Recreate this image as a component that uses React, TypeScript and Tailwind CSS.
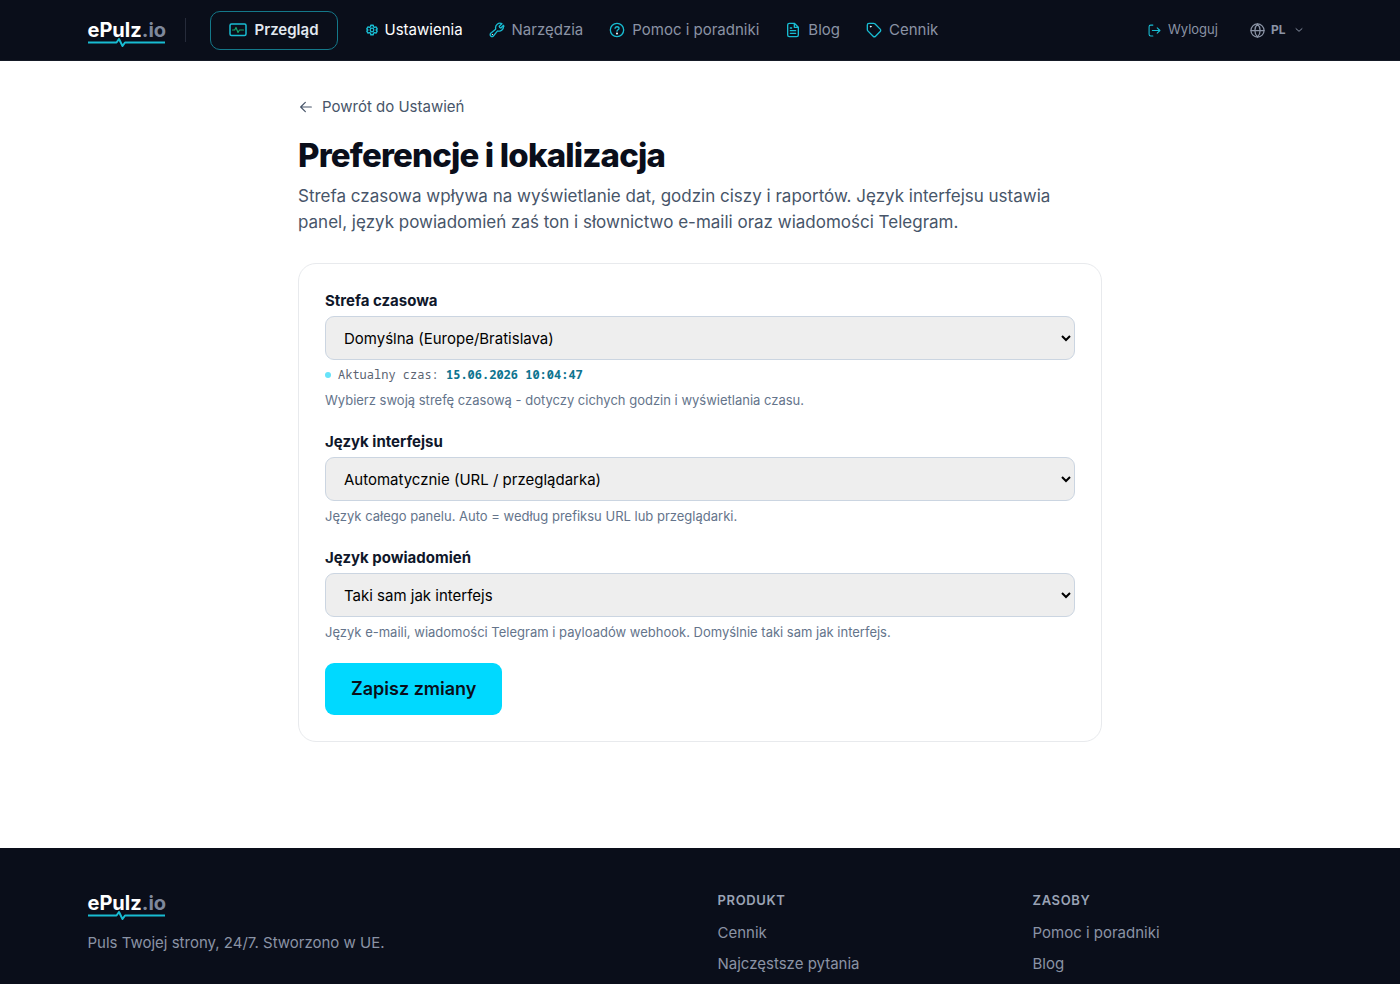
import React, { useState } from 'react'

type IconProps = {
  className?: string;
  children: React.ReactNode;
}

const Icon = ({ className = "", children }: IconProps) => (
  <svg viewBox="0 0 24 24" fill="none" stroke="currentColor" strokeWidth="2" strokeLinecap="round"
    strokeLinejoin="round" aria-hidden="true" className={`shrink-0 ${className}`}>
    {children}
  </svg>
)

const NavLinks = [
  {
    label: "Ustawienia",
    active: true,
    icon: (
      <Icon className="w-3 h-3">
        <path strokeWidth="2.8" d="M9.6 2.5h4.8l.7 3.1 1.9 1.1 3-1 2.4 4.1-2.3 2.2 2.3 2.2-2.4 4.1-3-1-1.9 1.1-.7 3.1H9.6l-.7-3.1L7 17.3l-3 1-2.4-4.1L3.9 12 1.6 9.8 4 5.7l3 1 1.9-1.1z" />
        <circle cx="12" cy="12" r="3.6" strokeWidth="2.6" />
      </Icon>
    ),
  },
  {
    label: "Narzędzia",
    icon: (
      <Icon className="w-4 h-4">
        <path d="M21.7 6.7a6.6 6.6 0 0 1-7.9 6.9c-.6-.1-1.2 0-1.6.5L6.6 21a2.8 2.8 0 0 1-4-4l6.9-5.6c.5-.4.6-1 .5-1.6a6.6 6.6 0 0 1 9.3-7.3l-4 4a3.4 3.4 0 0 0 2.5 2.5l4-4c.3.5.4 1.1.4 1.7z" />
        <circle cx="4.9" cy="18.9" r=".4" fill="white" stroke="white" strokeWidth="1" />
      </Icon>
    ),
  },
  {
    label: "Pomoc i poradniki",
    icon: (
      <Icon className="w-4 h-4">
        <circle cx="12" cy="12" r="10" />
        <path d="M9 9.3c.5-1.5 1.6-2.2 3-2.2 1.7 0 3 1 3 2.5 0 2-3 2.2-3 4.2" />
        <circle cx="12" cy="17.2" r=".6" fill="white" stroke="white" />
      </Icon>
    ),
  },
  {
    label: "Blog",
    icon: (
      <Icon className="w-4 h-4">
        <path d="M14 2H6.5A2.5 2.5 0 0 0 4 4.5v15A2.5 2.5 0 0 0 6.5 22h11a2.5 2.5 0 0 0 2.5-2.5V8zM14 2v6h6M8 13h8M8 17h8M8 9h2" />
      </Icon>
    ),
  },
  {
    label: "Cennik",
    icon: (
      <Icon className="w-4 h-4">
        <path d="M2 4.5A2.5 2.5 0 0 1 4.5 2h7c.7 0 1.3.3 1.8.7l8 8c1 1 1 2.6 0 3.6l-7 7c-1 1-2.6 1-3.6 0l-8-8A2.500 2.500 0 0 1 2 11.500z" />
        <circle cx="7" cy="7" r=".6" fill="white" stroke="white" strokeWidth="1.5" />
      </Icon>
    ),
  },
]

const FooterLinks = [
  { title: "Produkt", links: ["Cennik", "Najczęstsze pytania"] },
  { title: "Zasoby", links: ["Pomoc i poradniki", "Blog"] },
]

const Logo = () => (
  <a href="#" className="block w-[77px] shrink-0">
    <span className="block text-[20px] leading-6 font-bold text-white">
      ePulz<span className="text-[#7f889b]">.io</span>
    </span>
    <svg viewBox="0 0 77 9" fill="none" stroke="#18bcd2" strokeWidth="2" strokeLinejoin="round"
      aria-hidden="true" className="block w-full h-[9px] -mt-1">
      <path d="M0 4.500h28.500l2.500-3.500 3.500 7 2.500-3.500h40" />
    </svg>
  </a>
)

const Nav = () => {
  return (
    <header className="bg-[#0a0e1a] h-[61px] border-b border-[#151a26]">
      <div className="flex items-center h-full w-[87.5%] mx-auto">
        <div className="mt-1">
          <Logo />
        </div>
        <span className="w-px h-6 ml-5 bg-[#262b3a]" />

        <nav className="flex items-center ml-6">
          <a href="#" className="flex items-center gap-2 h-[39px] px-[18px] mr-7 rounded-[10px] border border-[#14788a] text-[15px] leading-[22px] font-semibold text-[#e2e8f0]">
            <svg viewBox="0 0 18 14" fill="none" strokeWidth="1.5" strokeLinecap="round" strokeLinejoin="round"
              aria-hidden="true" className="w-[18px] h-[14px] shrink-0">
              <rect x="1" y="1" width="16" height="11.5" rx="1.5" stroke="#18bcd2" />
              <path d="M3.500 7h2.200l1.300-2.500 2 5 1.500-2.500h4" stroke="#16a36a" strokeWidth="1.2" />
            </svg>
            Przegląd
          </a>
          <div className="flex items-center gap-[26px]">
            {NavLinks.map((link) => (
              <a
                key={link.label}
                href="#"
                className={`flex items-center gap-[7px] text-[15px] leading-6 ${link.active ? "text-white" : "text-[#8a93a5]"}`}
              >
                <span className="text-[#18bcd2]">{link.icon}</span>
                {link.label}
              </a>
            ))}
          </div>
        </nav>

        <div className="flex items-center ml-auto pr-[10px]">
          <a href="#" className="flex items-center gap-[7px] text-[13px] text-[#8a93a5]">
            <Icon className="w-[13px] h-[13px] text-[#18bcd2]">
              <path d="M9 2H5a3 3 0 0 0-3 3v14a3 3 0 0 0 3 3h4M8 12h14M17 7l5 5-5 5" />
            </Icon>
            Wyloguj
          </a>
          <button className="flex items-center ml-8 text-[12px] font-bold text-[#8a93a5]">
            <Icon className="w-[15px] h-[15px]">
              <circle cx="12" cy="12" r="10.5" />
              <path d="M1.500 12h21M12 1.500c3 3 4.200 6.500 4.200 10.500S15 19.500 12 22.500C9 19.500 7.800 16 7.800 12S9 4.500 12 1.500z" />
            </Icon>
            <span className="ml-[6px]">PL</span>
            <Icon className="w-2 h-2 ml-[9px]">
              <path strokeWidth="3" d="M3 8l9 8 9-8" />
            </Icon>
          </button>
        </div>
      </div>
    </header>
  )
}

type FieldProps = {
  id: string;
  label: string;
  value: string;
  hint: string;
  children?: React.ReactNode;
}

const Field = ({ id, label, value, hint, children }: FieldProps) => (
  <div className="mb-[22px]">
    <label htmlFor={id} className="block mb-1 text-[15px] leading-[22px] font-bold text-[#0f172a]">{label}</label>
    <select id={id} className="block w-full h-11 pl-[14px] rounded-[9px] border border-[#cbd5e1] bg-[#eeeeee] text-[15px] text-black">
      <option>{value}</option>
    </select>
    {children}
    <p className="mt-[6px] text-[13px] leading-[18px] text-[#64748b]">{hint}</p>
  </div>
)

const App = () => {
  const [time] = useState("15.06.2026 10:04:47")

  return (
    <div className="min-h-screen flex flex-col bg-white font-['Inter',sans-serif]">
      <Nav />

      <main className="w-full max-w-[804px] mx-auto pt-[34px] pb-[106px]">
        <a href="#" className="flex w-fit items-center gap-2 text-[15px] leading-6 text-[#475569]">
          <Icon className="w-4 h-4">
            <path strokeWidth="1.8" d="M20 12H4M11 5l-7 7 7 7" />
          </Icon>
          Powrót do Ustawień
        </a>
        <h1 className="mt-4 text-[33px] leading-10 font-extrabold tracking-tight text-[#0a0e1a]">Preferencje i lokalizacja</h1>
        <p className="mt-2 max-w-[780px] text-[17px] leading-[26px] text-[#475569]">
          Strefa czasowa wpływa na wyświetlanie dat, godzin ciszy i raportów. Język interfejsu ustawia
          panel, język powiadomień zaś ton i słownictwo e-maili oraz wiadomości Telegram.
        </p>

        <form className="mt-7 p-[26px] rounded-[18px] border border-[#e8eaed]">
          <Field
            id="timezone"
            label="Strefa czasowa"
            value="Domyślna (Europe/Bratislava)"
            hint="Wybierz swoją strefę czasową - dotyczy cichych godzin i wyświetlania czasu."
          >
            <div className="flex items-center mt-[5px] font-['Noto_Sans_Mono','DejaVu_Sans_Mono',monospace] text-[12px] leading-5 text-[#5b6472]">
              <span className="w-[6px] h-[6px] mr-[7px] rounded-full bg-[#67e3f9]" />
              <span>Aktualny czas: <b className="font-bold text-[#0e7490]">{time}</b></span>
            </div>
          </Field>
          <Field
            id="ui-lang"
            label="Język interfejsu"
            value="Automatycznie (URL / przeglądarka)"
            hint="Język całego panelu. Auto = według prefiksu URL lub przeglądarki."
          />
          <Field
            id="notify-lang"
            label="Język powiadomień"
            value="Taki sam jak interfejs"
            hint="Język e-maili, wiadomości Telegram i payloadów webhook. Domyślnie taki sam jak interfejs."
          />
          <button type="button" className="h-[52px] px-[26px] rounded-[9px] bg-[#00d9ff] text-[18px] leading-6 font-semibold text-[#0a0e1a]">
            Zapisz zmiany
          </button>
        </form>
      </main>

      <footer className="flex-1 bg-[#0a0e1a]">
        <div className="grid grid-cols-4 gap-x-[35px] w-[87.5%] mx-auto pt-[43px]">
          <div className="col-span-2">
            <Logo />
            <p className="mt-[11px] text-[15px] leading-6 text-[#8a93a5]">Puls Twojej strony, 24/7. Stworzono w UE.</p>
          </div>
          {FooterLinks.map((col) => (
            <div key={col.title}>
              <h2 className="mb-3 text-[13px] leading-[18px] font-semibold uppercase tracking-wider text-[#9aa3b5]">{col.title}</h2>
              <ul className="space-y-[7px]">
                {col.links.map((link) => (
                  <li key={link}>
                    <a href="#" className="block text-[15px] leading-6 text-[#8a93a5]">{link}</a>
                  </li>
                ))}
              </ul>
            </div>
          ))}
        </div>
      </footer>
    </div>
  )
}

export default App
